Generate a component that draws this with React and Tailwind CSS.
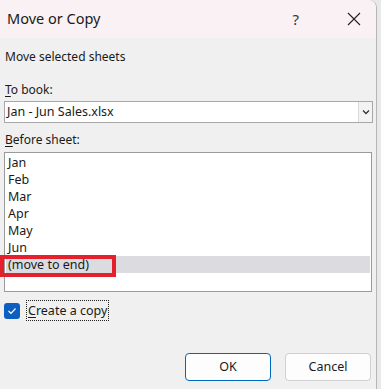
import React from "react";

export default function App() {
  const items = ["Jan", "Feb", "Mar", "Apr", "May", "Jun", "(move to end)"];
  return (
    <div className="w-[381px] h-[389px] bg-[#e9e9e9] overflow-hidden font-['Noto_Sans',sans-serif] text-[#1a1a1a]">
      <div className="w-[377px] h-full bg-[#f0f0f0] border-r border-[#b5b5b5] rounded-tr-[8px] flex flex-col">
        <div className="h-[38px] bg-[#f9f1f4] rounded-tr-[8px] flex items-center pl-[7px] pr-[14px] shrink-0">
          <span className="text-[14.5px] text-[#1a1a1a]">Move or Copy</span>
          <span className="ml-auto text-[15px] text-[#333] mr-[48px]">?</span>
          <svg width="14" height="14" viewBox="0 0 14 14" className="mr-[1px]">
            <path d="M1 1 L13 13 M13 1 L1 13" stroke="#222" strokeWidth="1.1" />
          </svg>
        </div>
        <div className="flex flex-col px-[4px] text-[12px]">
          <div className="mt-[11px] h-[16px] leading-[16px] pl-[1px]">Move selected sheets</div>
          <div className="mt-[17px] h-[16px] leading-[16px] pl-[1px]">
            <u className="underline-offset-2">T</u>o book:
          </div>
          <div className="mt-[3px] h-[22px] w-[369px] bg-white border border-[#a8a8a8] flex items-center">
            <span className="pl-[2px] text-[12.5px]">Jan - Jun Sales.xlsx</span>
            <div className="ml-auto h-full w-[14px] bg-[#f3f3f3] border-l border-[#dadada] flex items-center justify-center">
              <svg width="8" height="6" viewBox="0 0 8 6">
                <path d="M1 1.5 L4 4.5 L7 1.5" stroke="#333" strokeWidth="1.3" fill="none" />
              </svg>
            </div>
          </div>
          <div className="mt-[9px] h-[16px] leading-[16px] pl-[1px]">
            <u className="underline-offset-2">B</u>efore sheet:
          </div>
          <div className="mt-[4px] h-[140px] w-[368px] bg-white border border-[#9a9a9a] flex flex-col pt-[1px] px-[1px]">
            {items.map((t, i) => (
              <div
                key={t}
                className={
                  "h-[17px] leading-[17px] pl-[2px] text-[12.5px] " +
                  (i === 6 ? "bg-[#dcdce0] relative" : "")
                }
              >
                {t}
                {i === 6 && (
                  <div className="absolute left-[-6px] top-[-1px] w-[116px] h-[22px] border-[4px] border-[#e3202b]"></div>
                )}
              </div>
            ))}
          </div>
          <div className="mt-[8px] flex items-center h-[21px]">
            <div className="w-[16px] h-[16px] rounded-[3px] bg-[#0f5fc0] flex items-center justify-center">
              <svg width="10" height="8" viewBox="0 0 10 8">
                <path d="M1.5 4 L4 6.3 L8.5 1.5" stroke="#fff" strokeWidth="1.2" fill="none" />
              </svg>
            </div>
            <div className="ml-[6px] h-[21px] leading-[19px] px-[1px] border border-dotted border-[#222] text-[12.5px]">
              <u className="underline-offset-2">C</u>reate a copy
            </div>
          </div>
          <div className="mt-[32px] flex justify-end gap-[14px] pr-[1px]">
            <button className="w-[86px] h-[28px] rounded-[4px] bg-[#fdfdfd] border border-[#0067c0] text-[12.5px] text-[#1a1a1a]">
              OK
            </button>
            <button className="w-[86px] h-[28px] rounded-[4px] bg-[#fdfdfd] border border-[#d0d0d0] text-[12.5px] text-[#1a1a1a]">
              Cancel
            </button>
          </div>
        </div>
      </div>
    </div>
  );
}
